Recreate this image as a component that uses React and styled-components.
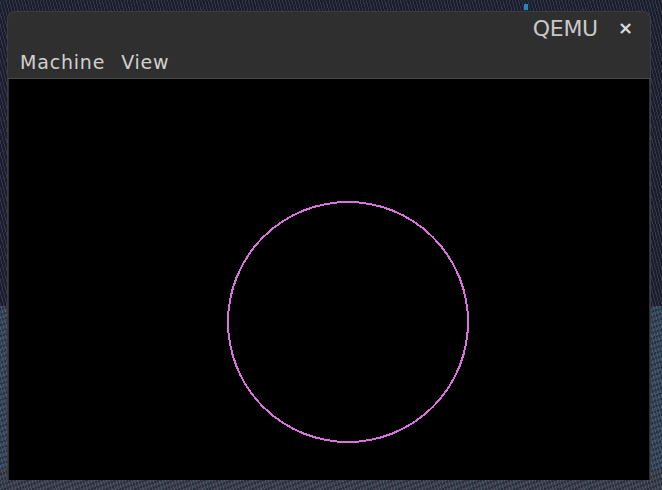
import React from "react";
import styled, { createGlobalStyle } from "styled-components";

const Global = createGlobalStyle`
  html, body { margin: 0; padding: 0; }
  body { width: 662px; height: 490px; overflow: hidden; background: #1c1c2c; }
`;

const Desktop = styled.div`
  position: relative;
  width: 662px;
  height: 490px;
  box-sizing: border-box;
  padding: 11px 11px 0 7px;
  background:
    radial-gradient(ellipse 60px 80px at 700px 420px, #2c3c60 0 55%, transparent 60%),
    repeating-linear-gradient(75deg, rgba(160,180,200,0.18) 0 1px, transparent 1px 3px),
    repeating-linear-gradient(160deg, rgba(20,30,45,0.5) 0 2px, transparent 2px 5px),
    linear-gradient(#1c1c2c 0 306px, #36465a 306px 470px, #3a3e4a 470px);
`;

const Marker = styled.div`
  position: absolute;
  left: 524px;
  top: 4px;
  width: 4px;
  height: 6px;
  background: #2088c0;
`;

const Window = styled.div`
  width: 644px;
  height: 469px;
  display: flex;
  flex-direction: column;
  background: #2f2f2f;
  border: 1px solid #3c3c3c;
  border-bottom: none;
  border-radius: 8px 8px 0 0;
  box-sizing: border-box;
  overflow: hidden;
  font-family: "DejaVu Sans", "Noto Sans", sans-serif;
  color: #cfcfcf;
`;

const TitleBar = styled.div`
  height: 38px;
  display: flex;
  align-items: center;
  justify-content: flex-end;
  gap: 20px;
  padding: 0 17px 0 0;
`;

const Title = styled.span`
  font-size: 22px;
  letter-spacing: -0.3px;
  color: #c8c8c8;
  margin-top: -6px;
`;

const Close = styled.span`
  font-size: 18px;
  font-weight: 700;
  color: #dcdcdc;
  margin-top: -8px;
`;

const MenuBar = styled.div`
  height: 28px;
  display: flex;
  align-items: center;
  gap: 16px;
  padding: 0 12px;
  border-bottom: 1px solid #4a4a4a;
`;

const MenuItem = styled.span`
  font-size: 19px;
  letter-spacing: 0.8px;
  color: #d0d0d0;
  margin-top: -4px;
`;

const Screen = styled.div`
  flex: 1;
  margin: 0 1px;
  background: #000;
  display: flex;
  align-items: flex-start;
  justify-content: center;
`;

const Canvas = styled.svg`
  display: block;
  margin-top: 121px;
  margin-left: 38px;
`;

export default function App() {
  return (
    <>
      <Global />
      <Desktop>
        <Marker />
        <Window>
          <TitleBar>
            <Title>QEMU</Title>
            <Close>×</Close>
          </TitleBar>
          <MenuBar>
            <MenuItem>Machine</MenuItem>
            <MenuItem>View</MenuItem>
          </MenuBar>
          <Screen>
            <Canvas width="244" height="244" viewBox="0 0 244 244">
              <circle
                cx="122"
                cy="122"
                r="120"
                fill="none"
                stroke="#d872dc"
                strokeWidth="2"
                shapeRendering="crispEdges"
              />
            </Canvas>
          </Screen>
        </Window>
      </Desktop>
    </>
  );
}
